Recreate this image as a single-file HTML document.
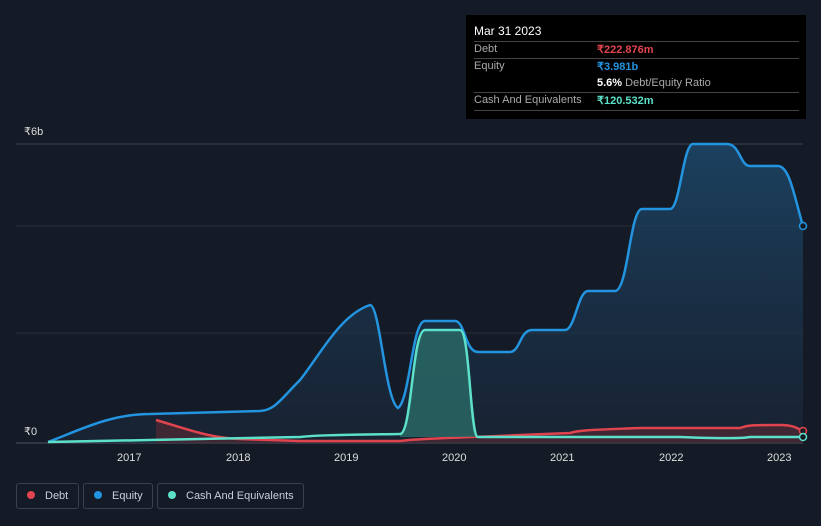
<!DOCTYPE html>
<html><head><meta charset="utf-8"><style>
body{margin:0;width:821px;height:526px;background:#151b26;font-family:"Liberation Sans",sans-serif;overflow:hidden;position:relative}
.tt{position:absolute;left:466px;top:15px;width:340px;height:104px;background:#000;color:#fff;font-size:11px}
.tt .r{position:absolute;left:8px;width:325px;border-top:1px solid #444}
.lg{position:absolute;top:483px;height:26px;border:1px solid #3a414d;border-radius:3px;color:#ccd;font-size:11px;line-height:25px;box-sizing:border-box;white-space:nowrap}
.lg i{display:inline-block;width:8px;height:8px;border-radius:50%;margin:0 10px 0 10px;vertical-align:0}
</style></head><body>
<svg width="821" height="526" style="position:absolute;left:0;top:0">
<defs><linearGradient id="g" x1="0" y1="0" x2="0" y2="1"><stop offset="0" stop-color="#1d4a6e" stop-opacity=".8"/><stop offset="1" stop-color="#1a2a3e" stop-opacity=".5"/></linearGradient></defs>
<line x1="16" y1="144" x2="803" y2="144" stroke="#3a414d"/>
<line x1="16" y1="226" x2="803" y2="226" stroke="#262d39"/>
<line x1="16" y1="333" x2="803" y2="333" stroke="#262d39"/>
<line x1="16" y1="443" x2="803" y2="443" stroke="#4a515d"/>
<g font-size="11" fill="#ddd"><text x="24" y="135">₹6b</text><text x="24" y="435">₹0</text>
<text x="117" y="461">2017</text><text x="226" y="461">2018</text><text x="334" y="461">2019</text><text x="442" y="461">2020</text><text x="550" y="461">2021</text><text x="659" y="461">2022</text><text x="767" y="461">2023</text></g>
<path d="M48,442 C80,430 110,414 150,414 L260,411 C275,410 280,400 300,380 C320,355 340,315 370,305 C380,305 385,400 398,408 C410,400 412,321 425,321 L455,321 C465,321 465,352 478,352 L510,352 C520,352 520,330 532,330 L565,330 C575,330 578,291 588,291 L615,291 C628,291 630,209 642,209 L670,209 C680,209 683,144 693,144 L727,144 C740,144 740,166 750,166 L778,166 C790,166 795,200 803,226 L803,443 L48,443Z" fill="url(#g)"/>
<path d="M48,442 C80,430 110,414 150,414 L260,411 C275,410 280,400 300,380 C320,355 340,315 370,305 C380,305 385,400 398,408 C410,400 412,321 425,321 L455,321 C465,321 465,352 478,352 L510,352 C520,352 520,330 532,330 L565,330 C575,330 578,291 588,291 L615,291 C628,291 630,209 642,209 L670,209 C680,209 683,144 693,144 L727,144 C740,144 740,166 750,166 L778,166 C790,166 795,200 803,226" fill="none" stroke="#2394df" stroke-width="2.5"/>
<path d="M156,420 C190,430 210,438 240,439 L300,441 L400,441 C420,438 460,438 520,435 L570,433 C580,430 590,430 640,428 L690,428 L740,428 C748,425 750,425 780,425 C795,425 798,429 803,431 L803,443 L156,443Z" fill="#5a2a35" opacity=".6"/>
<path d="M156,420 C190,430 210,438 240,439 L300,441 L400,441 C420,438 460,438 520,435 L570,433 C580,430 590,430 640,428 L690,428 L740,428 C748,425 750,425 780,425 C795,425 798,429 803,431" fill="none" stroke="#e0444f" stroke-width="2.5"/>
<path d="M400,434 C412,434 412,330 425,330 L460,330 C470,330 470,437 478,437 L400,437Z" fill="#2b6a66" opacity=".8"/>
<path d="M48,442 L150,440 L300,437 C320,435 340,435 400,434 C412,434 412,330 425,330 L460,330 C470,330 470,437 478,437 L680,437 C700,438 740,439 750,437 L803,437" fill="none" stroke="#5ce0c9" stroke-width="2.5"/>
<circle cx="803" cy="226" r="3.5" fill="#151b26" stroke="#2394df" stroke-width="1.5"/>
<circle cx="803" cy="431" r="3.5" fill="#151b26" stroke="#e0444f" stroke-width="1.5"/>
<circle cx="803" cy="437" r="3.5" fill="#151b26" stroke="#5ce0c9" stroke-width="1.5"/>
</svg>
<div class="tt">
<div style="position:absolute;left:8px;top:9px;font-size:12px">Mar 31 2023</div>
<div class="r" style="top:26px"></div>
<div style="position:absolute;left:8px;top:28px;color:#aaa">Debt</div><div style="position:absolute;left:131px;top:28px;color:#e0444f;font-weight:bold">₹222.876m</div>
<div class="r" style="top:43px"></div>
<div style="position:absolute;left:8px;top:45px;color:#aaa">Equity</div><div style="position:absolute;left:131px;top:45px;color:#2394df;font-weight:bold">₹3.981b</div>
<div style="position:absolute;left:131px;top:62px;color:#aaa"><b style="color:#fff">5.6%</b> Debt/Equity Ratio</div>
<div class="r" style="top:77px"></div>
<div style="position:absolute;left:8px;top:79px;color:#aaa">Cash And Equivalents</div><div style="position:absolute;left:131px;top:79px;color:#5ce0c9;font-weight:bold">₹120.532m</div>
<div class="r" style="top:95px"></div>
</div>
<div class="lg" style="left:16px;width:63px"><i style="background:#e0444f"></i>Debt</div>
<div class="lg" style="left:83px;width:70px"><i style="background:#2394df"></i>Equity</div>
<div class="lg" style="left:157px;width:147px"><i style="background:#5ce0c9"></i>Cash And Equivalents</div>
</body></html>
